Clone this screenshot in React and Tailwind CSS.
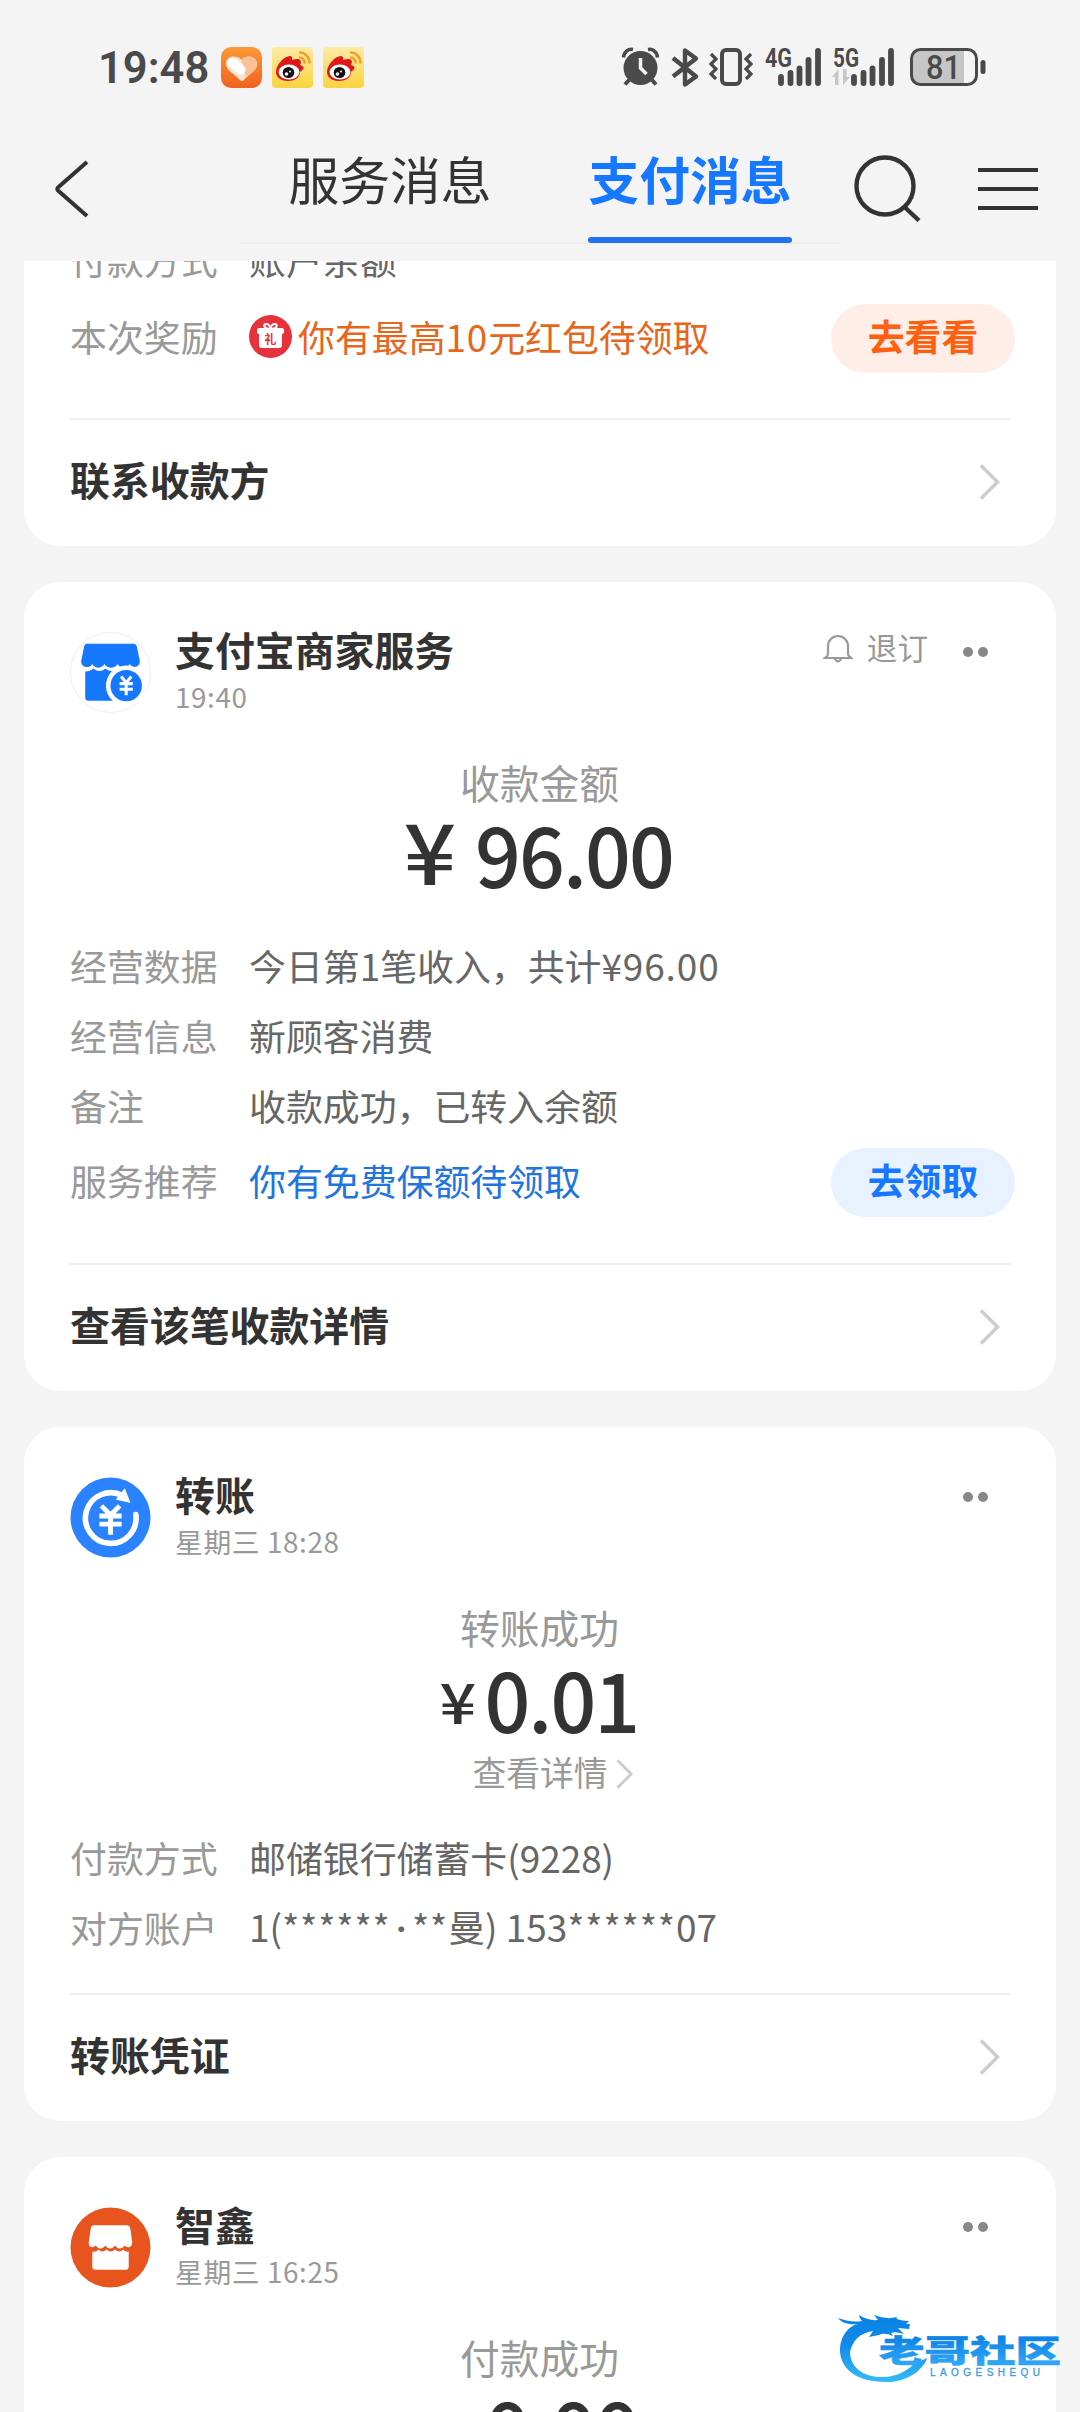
import React from 'react';

function HeartApp() {
  return (
    <svg className="w-[41px] h-[41px]" viewBox="0 0 41 41">
      <defs>
        <linearGradient id="heartBg" x1="0" y1="0" x2="0" y2="1">
          <stop offset="0" stopColor="#fb9a35" />
          <stop offset="1" stopColor="#f0621f" />
        </linearGradient>
      </defs>
      <rect width="41" height="41" rx="10" fill="url(#heartBg)" />
      <path d="M20.500 13c3.500-5.500 15.500-5 15.500 4 0 7-8 10-13 16q-2 2-4 0C14 27 5 24 5 16.500 5 8 17 7.500 20.500 13z" fill="#fde3d0" />
      <path d="M20.500 13c3.500-5.500 15.500-5 15.500 4 0 6-6 9-11 14l-2-9z" fill="#fbc096" />
      <path d="M11.500 15.500l8 7" stroke="#fff" strokeWidth="10" strokeLinecap="round" />
    </svg>
  );
}

function WeiboApp() {
  return (
    <svg className="w-[41px] h-[41px]" viewBox="0 0 41 41">
      <defs>
        <linearGradient id="weiboBg" x1="0" y1="0" x2="0" y2="1">
          <stop offset="0" stopColor="#fdeaa6" />
          <stop offset="1" stopColor="#fbd43f" />
        </linearGradient>
      </defs>
      <rect width="41" height="41" rx="4" fill="url(#weiboBg)" />
      <path d="M4 25C4 18 12 9 18 9c3 0 2 4 2 4s6-2 8 0 0 5 0 5c8 2 0 7 0 7 0 6-6 9-12 9S4 31 4 25z" fill="#e0161c" />
      <ellipse cx="17" cy="25" rx="10.500" ry="7.500" fill="#fff" />
      <ellipse cx="16.500" cy="25.500" rx="5.800" ry="5.500" fill="#111" />
      <circle cx="14.500" cy="27" r="1.800" fill="#fff" />
      <circle cx="18" cy="24.500" r="1" fill="#fff" />
      <path d="M27 5.500c6-.5 11 5 10.500 11M27 10.500c3.500 0 6 2.500 5.500 6" fill="none" stroke="#efa12c" strokeWidth="2.400" />
    </svg>
  );
}

function StatusIcons() {
  return (
    <svg className="w-[365px] h-[40px] overflow-visible" viewBox="0 0 365 40" fill="#4a4a4a">
      {/* alarm */}
      <circle cx="18.500" cy="20" r="17" />
      <path d="M1.500 9.500C2 4 6 .5 11 1.500M26 1.500c5-1 9 2.500 9.500 8" fill="none" stroke="#4a4a4a" strokeWidth="3.500" />
      <path d="M7 32l-4 4.500M30 32l4 4.500" stroke="#4a4a4a" strokeWidth="4" />
      <path d="M18.500 10v10l6 6" fill="none" stroke="#f4f4f4" strokeWidth="3.500" />
      {/* bluetooth */}
      <path d="M51 10l23 18.500-11 8V2.500l11 8L51 28.500" fill="none" stroke="#4a4a4a" strokeWidth="4.400" strokeLinejoin="round" />
      {/* vibrate */}
      <rect x="100" y="2" width="18" height="34" rx="4" fill="none" stroke="#4a4a4a" strokeWidth="4" />
      <path d="M89 6l5 5-5 5 5 5-5 5 5 5M129 6l-5 5 5 5-5 5 5 5-5 5" fill="none" stroke="#4a4a4a" strokeWidth="3.200" />
      {/* signals */}
      <text x="143" y="18.500" fontFamily="Roboto, sans-serif" fontWeight="700" fontSize="25" textLength="27" lengthAdjust="spacingAndGlyphs">4G</text>
      <path d="M159 29v6M168.500 25v10M177.500 20.500v14.500M186.500 12v23M196 3v32" stroke="#4a4a4a" strokeWidth="5.800" strokeLinecap="round" />
      <text x="211" y="18.500" fontFamily="Roboto, sans-serif" fontWeight="700" fontSize="25" textLength="26" lengthAdjust="spacingAndGlyphs">5G</text>
      <path d="M210 29l6.500-8v16h-3.500v-8zM228 29l-7 8V21h3.500v8z" fill="#c6c6c6" />
      <path d="M232 29v6M241.500 25v10M250.500 20.500v14.500M260 12v23M269 3v32" stroke="#4a4a4a" strokeWidth="5.800" strokeLinecap="round" />
      {/* battery */}
      <path d="M297 2h45v34h-45q-7 0-8-8V10q1-8 8-8z" fill="#c6c6c6" />
      <rect x="289.500" y="1.500" width="65" height="35" rx="9" fill="none" stroke="#4a4a4a" strokeWidth="3" />
      <rect x="358.500" y="12" width="5" height="14" rx="2.500" />
      <text x="304" y="31" fontFamily="Roboto, sans-serif" fontWeight="500" fontSize="34" textLength="35" lengthAdjust="spacingAndGlyphs">81</text>
    </svg>
  );
}

function Header() {
  return (
    <header className="h-[261px] shrink-0">
      <div className="flex h-[134px] items-center pl-[98px] pr-[93px]">
        <span className="w-[123px] font-[Roboto] text-[43.500px] font-semibold text-[#4a4a4a] leading-none mt-[3px]">19:48</span>
        <div className="flex gap-[10px]">
          <HeartApp />
          <WeiboApp />
          <WeiboApp />
        </div>
        <div className="ml-auto pt-[2px]">
          <StatusIcons />
        </div>
      </div>
      <nav className="flex h-[110px] items-center">
        <div className="w-[240px] pl-[54px]">
          <svg className="w-[35px] h-[58px]" viewBox="0 0 35 58" fill="none" stroke="#333" strokeWidth="4">
            <path d="M33 2L4 27.500q-1.500 1.500 0 3L33 56" />
          </svg>
        </div>
        <div className="flex w-[600px] h-full border-b-2 border-[#eee]">
          <div className="flex-1 text-center text-[50.800px] leading-[88px] text-[#333]">服务消息</div>
          <div className="flex-1 flex flex-col items-center">
            <span className="text-[50.800px] leading-[88px] font-bold text-[#1677ff]">支付消息</span>
            <span className="mt-[15px] h-[6px] w-[204px] shrink-0 rounded-full bg-[#1f75f0]" />
          </div>
        </div>
        <svg className="ml-[14px] -mt-[2px] w-[67px] h-[67px]" viewBox="0 0 67 67" fill="none" stroke="#333" strokeWidth="4.400">
          <circle cx="31" cy="31" r="28.500" />
          <path d="M50.500 52L65 65.500" />
        </svg>
        <div className="ml-[57px] -mt-[1px] flex w-[60px] flex-col gap-[15px]">
          <span className="h-[4px] bg-[#333]" />
          <span className="h-[4px] bg-[#333]" />
          <span className="h-[4px] bg-[#333]" />
        </div>
      </nav>
    </header>
  );
}

function Chevron({ className }) {
  return (
    <svg className={className} viewBox="0 0 20 36" fill="none" stroke="#ccc" strokeWidth="3.400">
      <path d="M1.500 1.500L18 18 1.500 34.500" />
    </svg>
  );
}

function Row({ label, children }) {
  return (
    <div className="flex h-[70px] items-center pt-[2px] text-[36.900px]">
      <span className="w-[179px] text-[#999]">{label}</span>
      <span className="text-[#666]">{children}</span>
    </div>
  );
}

function ActionRow({ label, action, textColor, buttonColor, children }) {
  return (
    <div className="flex h-[85px] items-center text-[36.900px] -mr-[5px]">
      <span className="w-[179px] -mt-[3px] text-[#999]">{label}</span>
      <div className={`flex items-center ${textColor}`}>{children}</div>
      <div className={`ml-auto h-[69px] w-[184px] rounded-full text-center text-[36.800px] leading-[62px] font-bold ${buttonColor}`}>{action}</div>
    </div>
  );
}

function CardFooter({ children }) {
  return (
    <div className="flex h-[128px] items-center border-t-2 border-[#efefef] pb-[3px] pr-[10px]">
      <span className="-mt-[5px] text-[39.900px] font-bold text-[#333]">{children}</span>
      <Chevron className="ml-auto w-[21px] h-[36px]" />
    </div>
  );
}

function Card({ icon, title, time, unsubscribe, children }) {
  return (
    <section className="mt-[36px] rounded-[36px] bg-white px-[46px] pt-[50px]">
      <div className="flex h-[80px]">
        {icon}
        <div className="ml-[24px]">
          <div className="text-[39.900px] leading-[36px] font-bold text-[#333] -mt-[1px]">{title}</div>
          <div className="mt-[12px] text-[27.800px] leading-[34px] tracking-[0.6px] text-[#999]">{time}</div>
        </div>
        <div className="ml-auto flex h-[40px] items-center pr-[22px]">
          {unsubscribe && (
            <div className="mr-[35px] flex items-center text-[30.600px] leading-none text-[#999] -mt-[7px]">
              <svg className="mr-[14px] w-[30px] h-[30px]" viewBox="0 0 30 30" fill="none" stroke="#999" strokeWidth="2.200">
                <path d="M5 20V12a10 10 0 0 1 20 0v8q0 2 3 4H2q3-2 3-4zM11.500 24q3.500 7 7 0" />
              </svg>
              <span className="-mt-[2px]">退订</span>
            </div>
          )}
          <span className="mr-[5px] h-[10px] w-[10px] rounded-full bg-[#888]" />
          <span className="h-[10px] w-[10px] rounded-full bg-[#888]" />
        </div>
      </div>
      {children}
    </section>
  );
}

function Amount({ label, value, large }) {
  return (
    <>
      <div className="mt-[42px] pr-[1px] text-center text-[39.800px] leading-[56px] text-[#999]">{label}</div>
      <div className="flex h-[83px] items-center justify-center pl-[2px] text-[83px] font-medium leading-[84px] text-[#333]">
        {large ? (
          <span className="mr-[18px] -mt-[6px] scale-x-110 text-[84px]">¥</span>
        ) : (
          <span className="mr-[8px] mt-[7px] scale-x-115 text-[56px]">¥</span>
        )}
        <span className="origin-center scale-x-[0.97] tracking-[-2px]">{value}</span>
      </div>
    </>
  );
}

function MerchantIcon() {
  return (
    <svg className="w-[81px] h-[81px]" viewBox="0 0 80 80">
      <circle cx="40" cy="40" r="39.500" fill="#fff" stroke="#f0f0f0" />
      <path d="M16 11.500h47q2.500 0 3 2.500l3 15c0 6-7 7.500-10 2.500-3 5-9 5-12 0-3 5-10 5-13 0-3 5-9 5-12 0-3 5-11 4-11-2.500l3-15q.5-2.500 2-2.500z" fill="#1677ff" />
      <path d="M15 39q5 0 8-3 6 5 12 0 6 5 12 0l1 32H18q-3 0-3-3z" fill="#1677ff" />
      <circle cx="55.500" cy="53" r="20" fill="#fff" />
      <circle cx="55.500" cy="53" r="15.500" fill="#1677ff" />
      <path d="M50.500 44l5 6 5-6M55.500 50v12.500M49 51h13M49 56.500h13" stroke="#fff" strokeWidth="3" fill="none" />
    </svg>
  );
}

function TransferIcon() {
  return (
    <svg className="w-[81px] h-[81px]" viewBox="0 0 80 80">
      <circle cx="40" cy="40" r="39.500" fill="#2b82fe" />
      <path d="M52 18.500A25 25 0 1 0 65 37" fill="none" stroke="#fff" strokeWidth="5.500" strokeLinecap="round" />
      <path d="M54 12l5 13-13-3z" fill="#fff" stroke="#fff" strokeLinejoin="round" />
      <path d="M31 28.500l9 9 9-9M40 37v20M29 38.500h22M29 46.500h22" stroke="#fff" strokeWidth="4.800" fill="none" />
    </svg>
  );
}

function ShopIcon() {
  return (
    <svg className="w-[81px] h-[81px]" viewBox="0 0 80 80">
      <circle cx="40" cy="40" r="39.500" fill="#e8541e" />
      <path d="M24 18h32q3 0 3.500 3l2 14c0 5-5 6-7.500 3-3 4-7 4-9.500 0-3 4-7 4-9.500 0-3 4-7 4-9.500 0-3 3-7.500 2-7-3l2-14q.5-3 3.500-3z" fill="#fff" />
      <path d="M22 44q4 1 6-2 4 4 8 0 4 4 8.500 0 4 4 8 0 3 3 5.500 2v15q0 3-3 3H25q-3 0-3-3z" fill="#fff" />
    </svg>
  );
}

function GiftIcon() {
  return (
    <svg className="w-[43px] h-[43px] mr-[6px] -mt-[3px]" viewBox="0 0 43 43">
      <circle cx="21.500" cy="21.500" r="21.500" fill="#e6323a" />
      <path d="M21.500 14c-7 0-8-5-4-5 3 0 4 5 4 5s1-5 4-5c4 0 3 5-4 5z" fill="none" stroke="#fff" strokeWidth="2" />
      <rect x="8" y="13" width="27" height="6" rx="2" fill="#fff" />
      <path d="M10 18h23v12q0 3-3 3H13q-3 0-3-3z" fill="#fff" />
      <text x="21.500" y="29" textAnchor="middle" fontSize="12" fontWeight="700" fill="#e6323a">礼</text>
    </svg>
  );
}

function Watermark() {
  return (
    <svg className="absolute left-[836px] top-[2310px] w-[228px] h-[76px]" viewBox="0 0 228 76">
      <defs>
        <linearGradient id="wave" x1="0" y1="0" x2="0" y2="76" gradientUnits="userSpaceOnUse">
          <stop offset="0.100" stopColor="#0a84e4" />
          <stop offset="0.450" stopColor="#1089ea" />
          <stop offset="1" stopColor="#3bc0fb" />
        </linearGradient>
        <linearGradient id="brand" x1="0" y1="0" x2="0" y2="1">
          <stop offset="0.300" stopColor="#0f86e6" />
          <stop offset="0.850" stopColor="#2fa6f5" />
        </linearGradient>
      </defs>
      <path d="M2 8q14 5 24 3-3-3-3-6 9 6 19 5l-4-5q12 5 23 2-3 3 12 4l-3 3h4l-1 5-11-1 6 6q-9-3-13-1l2 3q-9-4-14-1l-10 2 4-6Q18 24 14 42c0 16 15 26 33 25 14 0 25-7 31-13l13-6c-1 4-4 8-7 11-8 9-25 14-35 13C20 72 3 58 4 38 5 26 12 16 22 14 12 15 6 13 2 8z" fill="url(#wave)" />
      <g transform="translate(0 56) scale(1 0.700)">
        <text x="43" y="-6" fontSize="44" fontWeight="900" fill="url(#brand)" stroke="url(#brand)" strokeWidth="0.800" textLength="182" lengthAdjust="spacingAndGlyphs">老哥社区</text>
      </g>
      <text x="94" y="66" fontFamily="Liberation Sans, sans-serif" fontSize="10" fill="#3a9be8" stroke="#3a9be8" strokeWidth="0.300" textLength="110">LAOGESHEQU</text>
    </svg>
  );
}

export default function App() {
  return (
    <div className="relative flex h-[2412px] w-[1080px] flex-col overflow-hidden bg-[#f4f4f4] font-['Noto_Sans_CJK_SC',sans-serif]">
      <Header />
      <main className="flex-1 overflow-hidden px-[24px]">
        <section className="-mt-[37px] rounded-[36px] bg-white px-[46px]">
          <Row label="付款方式">账户余额</Row>
          <div className="mb-[37px] mt-[2px]">
            <ActionRow label="本次奖励" action="去看看" textColor="text-[#e8651c]" buttonColor="bg-[#ffeee8] text-[#ff6010]">
              <GiftIcon />
              <span className="-mt-[4px]">你有最高<span className="tracking-[0.8px]">10</span>元红包待领取</span>
            </ActionRow>
          </div>
          <CardFooter>联系收款方</CardFooter>
        </section>

        <Card icon={<MerchantIcon />} title="支付宝商家服务" time="19:40" unsubscribe>
          <Amount label="收款金额" value="96.00" large />
          <div className="mt-[37px] mb-[38px]">
            <Row label="经营数据">今日第1笔收入，共计<span className="tracking-[0.9px]">¥96.00</span></Row>
            <Row label="经营信息">新顾客消费</Row>
            <Row label="备注">收款成功，已转入余额</Row>
            <ActionRow label="服务推荐" action="去领取" textColor="text-[#1f75e0]" buttonColor="bg-[#e7f1ff] text-[#1677ff]">
              <span className="-mt-[3px]">你有免费保额待领取</span>
            </ActionRow>
          </div>
          <CardFooter>查看该笔收款详情</CardFooter>
        </Card>

        <Card icon={<TransferIcon />} title="转账" time="星期三 18:28">
          <Amount label="转账成功" value="0.01" />
          <div className="flex h-[66px] items-center justify-center pl-[26px] pt-[2px] text-[33.800px] text-[#999]">
            查看详情
            <Chevron className="ml-[7px] mt-[3px] w-[19px] h-[30px]" />
          </div>
          <div className="mt-[18px] mb-[31px]">
            <Row label="付款方式">邮储银行储蓄卡(9228)</Row>
            <Row label="对方账户">
              1(<span className="tracking-[0.9px]">******</span>
              <span className="mx-[5px] font-[Roboto] font-bold">·</span>
              <span className="tracking-[0.9px]">**</span>曼) 153<span className="tracking-[0.9px]">******</span>07
            </Row>
          </div>
          <CardFooter>转账凭证</CardFooter>
        </Card>

        <Card icon={<ShopIcon />} title="智鑫" time="星期三 16:25">
          <Amount label="付款成功" value="0.00" />
        </Card>
      </main>
      <Watermark />
    </div>
  );
}
